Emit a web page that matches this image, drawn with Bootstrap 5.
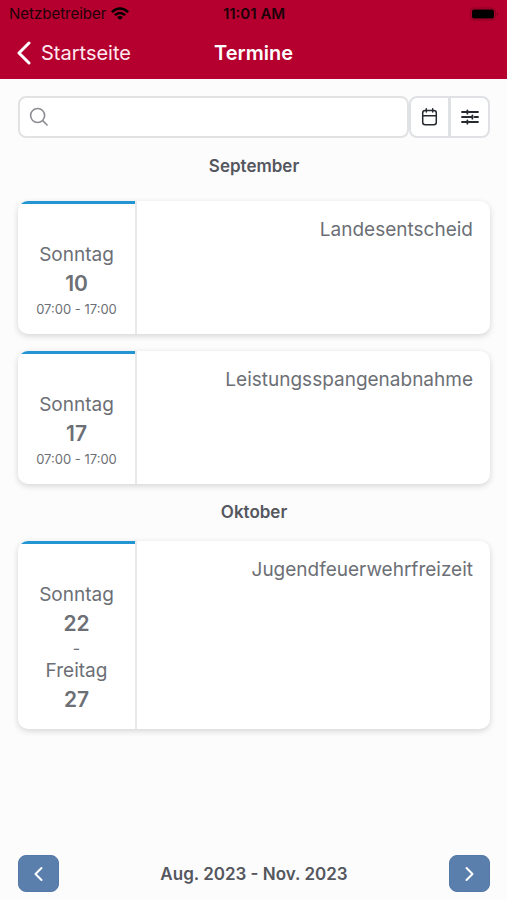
<!DOCTYPE html>
<html lang="de">
<head>
<meta charset="utf-8">
<meta name="viewport" content="width=device-width, initial-scale=1">
<title>Termine</title>
<link href="https://cdn.jsdelivr.net/npm/bootstrap@5.3.0/dist/css/bootstrap.min.css" rel="stylesheet">
<style>
  body { font-family: Inter, "Liberation Sans", sans-serif; background: #fcfcfd; color: #6c6f75; }
  svg { display: block; flex: none; }
  .app-header { background: #b5002f; border-bottom: 1px solid #b5002f; }
  .status-bar { height: 28px; font-size: 15px; line-height: 28px; color: #1c0008; padding: 0 8px 0 9px; }
  .status-time { font-weight: 600; }
  .title-bar { height: 50px; padding: 0 16px; color: #fff; font-size: 20px; line-height: 24px; }
  .title-bar h1 { font-size: 20px; line-height: 24px; font-weight: 600; }
  .back-link { gap: 9px; color: #ffe9ef; }
  .app-main { padding: 17px 17px 0 18px; }
  .search-box { height: 42px; border: 2px solid #e1e2e4; border-radius: 8px; background: #fff; padding: 0 9px; gap: 8px; }
  .search-box input { font-size: 16px; min-width: 0; }
  .tool-btn { width: 41px; height: 42px; border: 2px solid #dfe1e4; background: #fff; color: #26292d; border-radius: 8px; padding: 0; }
  .tool-btn + .tool-btn { margin-left: -1px; }
  .month-title { font-size: 17px; line-height: 24px; font-weight: 600; color: #54575d; }
  .month-title.first-month { margin: 16px 0 23px; }
  .month-title.next-month { margin: 16px 0 17px; }
  .event-card { border-radius: 10px; background: #fff; box-shadow: 0 2px 6px rgba(0,0,0,.16); overflow: hidden; }
  .event-list { gap: 17px; }
  .event-date { width: 119px; border-right: 2px solid #e9e9ea; padding-bottom: 14px; }
  .event-date::before { content: ""; display: block; height: 3px; background: #2395d3; margin-bottom: 37px; }
  .day-name { font-size: 19px; line-height: 28px; }
  .day-number { font-size: 21px; line-height: 30px; font-weight: 600; }
  .day-time { font-size: 13px; line-height: 21px; }
  .day-dash { font-size: 16px; line-height: 18px; }
  .event-name { font-size: 19px; line-height: 26px; padding: 16px 17px; }
  .pager { padding: 0 17px 8px 18px; }
  .pager-btn { width: 41px; height: 37px; background: #5b7fad; color: #fff; border: 1px solid #5478a8; border-radius: 8px; padding: 0; }
  .pager-label { font-size: 17px; line-height: 24px; font-weight: 600; color: #54575d; }
</style>
</head>
<body class="d-flex flex-column min-vh-100">
<header class="app-header">
  <div class="status-bar row g-0">
    <div class="col d-flex align-items-center">
      <span>Netzbetreiber</span>
      <svg class="ms-1" width="20" height="14" viewBox="0 0 20 14" fill="none" stroke="#000" stroke-width="2.4"><path d="M1.8 5.2Q10-2.2 18.2 5.2M4.8 8.2Q10 3.6 15.2 8.2"/><path d="M7 10.1Q10 7.8 13 10.1L10 13Z" fill="#000" stroke="none"/></svg>
    </div>
    <div class="col-auto status-time">11:01 AM</div>
    <div class="col d-flex align-items-center justify-content-end">
      <svg width="29" height="14" viewBox="0 0 29 14"><rect x=".5" y="1" width="25" height="12" rx="3.5" fill="none" stroke="#8c0022"/><rect x="2" y="2.5" width="22" height="9" rx="2" fill="#000"/><path d="M27 5q2.2 2 0 4Z" fill="#720019"/></svg>
    </div>
  </div>
  <div class="title-bar row g-0 align-items-center">
    <div class="col d-flex">
      <a href="#" class="back-link d-flex align-items-center text-decoration-none">
        <svg width="16" height="24" viewBox="0 0 16 24" fill="none" stroke="#fff" stroke-width="3" stroke-linecap="round" stroke-linejoin="round"><path d="M13 2 3 12l10 10"/></svg>
        <span>Startseite</span>
      </a>
    </div>
    <h1 class="col-auto mb-0">Termine</h1>
    <div class="col"></div>
  </div>
</header>

<main class="app-main flex-grow-1">
  <div class="d-flex">
    <label class="search-box d-flex align-items-center flex-grow-1">
      <svg width="20" height="20" viewBox="0 0 20 20" fill="none" stroke="#8b8d91" stroke-width="1.6" stroke-linecap="round"><circle cx="8.6" cy="8.5" r="7"/><path d="m13.7 13.6 4.4 4.4"/></svg>
      <input type="search" class="border-0 bg-transparent w-100" aria-label="Termine suchen">
    </label>
    <button type="button" class="tool-btn d-flex align-items-center justify-content-center rounded-end-0" aria-label="Kalender">
      <svg width="18" height="20" viewBox="0 0 18 20" fill="none" stroke="currentColor" stroke-width="1.5" stroke-linecap="round"><rect x="1.7" y="3.5" width="13.6" height="14.2" rx="2.5"/><path d="M1.7 8.8h13.6M5.3 1.8v3.2M11.7 1.8v3.2"/></svg>
    </button>
    <button type="button" class="tool-btn d-flex align-items-center justify-content-center rounded-start-0" aria-label="Filter">
      <svg width="18" height="18" viewBox="0 0 18 18" fill="none" stroke="currentColor" stroke-width="1.8" stroke-linecap="round"><path d="M1 4h5M8 4h9M1 9h10M13.5 9H17M1 14h5M8 14h9M6.4 2.3v3.4M11.4 7.3v3.4M6.4 12.3v3.4"/></svg>
    </button>
  </div>

  <h2 class="month-title first-month text-center">September</h2>
  <div class="event-list d-flex flex-column">
    <article class="event-card d-flex">
      <div class="event-date text-center flex-shrink-0">
        <div class="day-name">Sonntag</div>
        <div class="day-number">10</div>
        <div class="day-time">07:00 - 17:00</div>
      </div>
      <div class="event-name flex-grow-1 text-end">Landesentscheid</div>
    </article>
    <article class="event-card d-flex">
      <div class="event-date text-center flex-shrink-0">
        <div class="day-name">Sonntag</div>
        <div class="day-number">17</div>
        <div class="day-time">07:00 - 17:00</div>
      </div>
      <div class="event-name flex-grow-1 text-end">Leistungsspangenabnahme</div>
    </article>
  </div>

  <h2 class="month-title next-month text-center">Oktober</h2>
  <div class="event-list d-flex flex-column">
    <article class="event-card d-flex">
      <div class="event-date text-center flex-shrink-0">
        <div class="day-name">Sonntag</div>
        <div class="day-number">22</div>
        <div class="day-dash">-</div>
        <div class="day-name">Freitag</div>
        <div class="day-number">27</div>
      </div>
      <div class="event-name flex-grow-1 text-end">Jugendfeuerwehrfreizeit</div>
    </article>
  </div>
</main>

<footer class="pager d-flex align-items-center justify-content-between">
  <button type="button" class="pager-btn d-flex align-items-center justify-content-center" aria-label="Zurück">
    <svg width="10" height="16" viewBox="0 0 10 16" fill="none" stroke="currentColor" stroke-width="2" stroke-linecap="round" stroke-linejoin="round"><path d="M7.5 2l-6 6 6 6"/></svg>
  </button>
  <div class="pager-label">Aug. 2023 - Nov. 2023</div>
  <button type="button" class="pager-btn d-flex align-items-center justify-content-center" aria-label="Weiter">
    <svg width="10" height="16" viewBox="0 0 10 16" fill="none" stroke="currentColor" stroke-width="2" stroke-linecap="round" stroke-linejoin="round"><path d="m2.5 2 6 6-6 6"/></svg>
  </button>
</footer>
<script src="https://cdn.jsdelivr.net/npm/bootstrap@5.3.0/dist/js/bootstrap.bundle.min.js"></script>
</body>
</html>
